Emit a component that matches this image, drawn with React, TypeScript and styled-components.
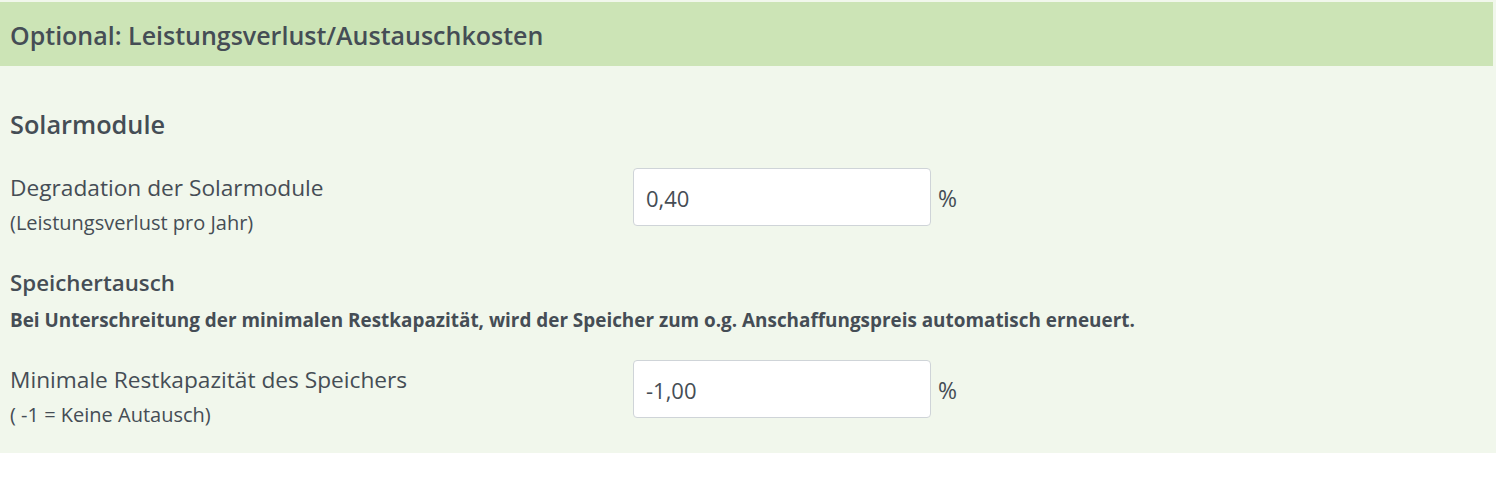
import React from "react";
import styled, { createGlobalStyle } from "styled-components";

const Global = createGlobalStyle`
  html, body { margin: 0; padding: 0; background: #ffffff; }
  body { font-family: "Open Sans", "Noto Sans", sans-serif; color: #454d55; }
  * { box-sizing: border-box; }
`;

const Panel = styled.section`
  background: #f1f7ec;
  padding: 2px 3px 0 0;
  width: 1496px;
`;

const Header = styled.h3`
  margin: 0;
  height: 64px;
  display: flex;
  align-items: center;
  padding: 2px 10px 0 10px;
  background: #cce4b6;
  font-size: 25px;
  font-weight: 600;
  color: #454d55;
`;

const Body = styled.div`
  padding: 41px 10px 25px 10px;
`;

const SectionTitle = styled.h4`
  margin: 0 0 27px 0;
  font-size: 25.3px;
  font-weight: 600;
  line-height: 34px;
`;

const Row = styled.div`
  display: flex;
  align-items: flex-start;
`;

const LabelCol = styled.div`
  width: 623px;
  display: flex;
  flex-direction: column;
  padding-top: 5px;
`;

const Label = styled.label`
  font-size: 22.7px;
  line-height: 30px;
`;

const Hint = styled.small`
  font-size: 20px;
  line-height: 26px;
  margin-top: 7px;
`;

const FieldCol = styled.div`
  display: flex;
  align-items: center;
  gap: 7px;
`;

const Input = styled.input`
  width: 298px;
  height: 58px;
  border: 1px solid #cfd4d8;
  border-radius: 4px;
  background: #ffffff;
  padding: 2px 12px 0 12px;
  font-family: inherit;
  font-size: 22px;
  color: #454d55;
  outline: none;
`;

const Unit = styled.span`
  font-size: 23px;
  padding-top: 2px;
`;

const SubTitle = styled.h5`
  margin: 32px 0 0 0;
  font-size: 22.3px;
  font-weight: 600;
  line-height: 30px;
`;

const Note = styled.p`
  margin: 9px 0 27px 0;
  font-size: 18.9px;
  font-weight: 700;
  line-height: 26px;
`;

export default function App() {
  return (
    <>
      <Global />
      <Panel>
        <Header>Optional: Leistungsverlust/Austauschkosten</Header>
        <Body>
          <SectionTitle>Solarmodule</SectionTitle>
          <Row>
            <LabelCol>
              <Label>Degradation der Solarmodule</Label>
              <Hint>(Leistungsverlust pro Jahr)</Hint>
            </LabelCol>
            <FieldCol>
              <Input defaultValue="0,40" />
              <Unit>%</Unit>
            </FieldCol>
          </Row>
          <SubTitle>Speichertausch</SubTitle>
          <Note>
            Bei Unterschreitung der minimalen Restkapazität, wird der Speicher zum o.g. Anschaffungspreis automatisch erneuert.
          </Note>
          <Row>
            <LabelCol>
              <Label>Minimale Restkapazität des Speichers</Label>
              <Hint>( -1 = Keine Autausch)</Hint>
            </LabelCol>
            <FieldCol>
              <Input defaultValue="-1,00" />
              <Unit>%</Unit>
            </FieldCol>
          </Row>
        </Body>
      </Panel>
    </>
  );
}
